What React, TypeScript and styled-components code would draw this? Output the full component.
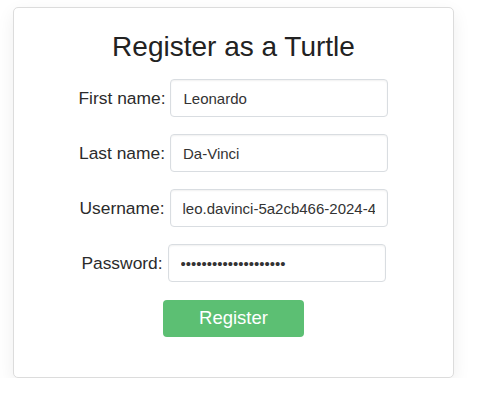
import React from 'react';
import styled, { createGlobalStyle } from 'styled-components';

const GlobalStyles = createGlobalStyle`
	body {
		margin: 0;
		background: #ffffff;
		font-family: "Liberation Sans", Arial, sans-serif;
		color: #333333;
	}
`;

const fields = [
	{ label: 'First name:', type: 'text', value: 'Leonardo' },
	{ label: 'Last name:', type: 'text', value: 'Da-Vinci' },
	{ label: 'Username:', type: 'text', value: 'leo.davinci-5a2cb466-2024-4f1a-9c3e-7b8d2e6f0a91' },
	{ label: 'Password:', type: 'password', value: 'turtlepower1452!!xyz' },
];

export default function App(): JSX.Element {
	return (
		<>
			<GlobalStyles />
			<Card>
				<Title>Register as a Turtle</Title>
				<Form onSubmit={(e) => e.preventDefault()}>
					{fields.map((f) => (
						<Row key={f.label}>
							<Label>{f.label}</Label>
							<Input type={f.type} defaultValue={f.value} />
						</Row>
					))}
					<Button type="submit">Register</Button>
				</Form>
			</Card>
		</>
	);
}

const Card = styled.div`
	box-sizing: border-box;
	width: 441px;
	margin: 7px 0 0 13px;
	padding: 23px 20px 40px;
	background: #ffffff;
	border: 1px solid #dcdcdc;
	border-radius: 5px;
	box-shadow: 0 6px 18px rgba(0, 0, 0, 0.07);
`;

const Title = styled.h2`
	margin: 0 0 16px;
	font-size: 28px;
	font-weight: 400;
	line-height: 32px;
	text-align: center;
	color: #222222;
`;

const Form = styled.form`
	display: flex;
	flex-direction: column;
	align-items: center;
	gap: 17px;
`;

const Row = styled.div`
	display: flex;
	align-items: center;
	justify-content: center;
	gap: 5px;
	height: 38px;
`;

const Label = styled.label`
	font-size: 17.4px;
	color: #2b2b2b;
	white-space: nowrap;
`;

const Input = styled.input`
	box-sizing: border-box;
	width: 218px;
	height: 38px;
	padding: 0 12px;
	font-family: "Liberation Sans", Arial, sans-serif;
	font-size: 15px;
	color: #333333;
	background: #ffffff;
	border: 1px solid #d9dde1;
	border-radius: 4px;
	box-shadow: inset 0 1px 2px rgba(0, 0, 0, 0.06);
	outline: none;
`;

const Button = styled.button`
	width: 141px;
	height: 37px;
	margin-top: 1px;
	padding: 0 0 2px;
	font-family: "Liberation Sans", Arial, sans-serif;
	font-size: 18.5px;
	color: #ffffff;
	background: #5cbf73;
	border: none;
	border-radius: 4px;
	cursor: pointer;
`;
